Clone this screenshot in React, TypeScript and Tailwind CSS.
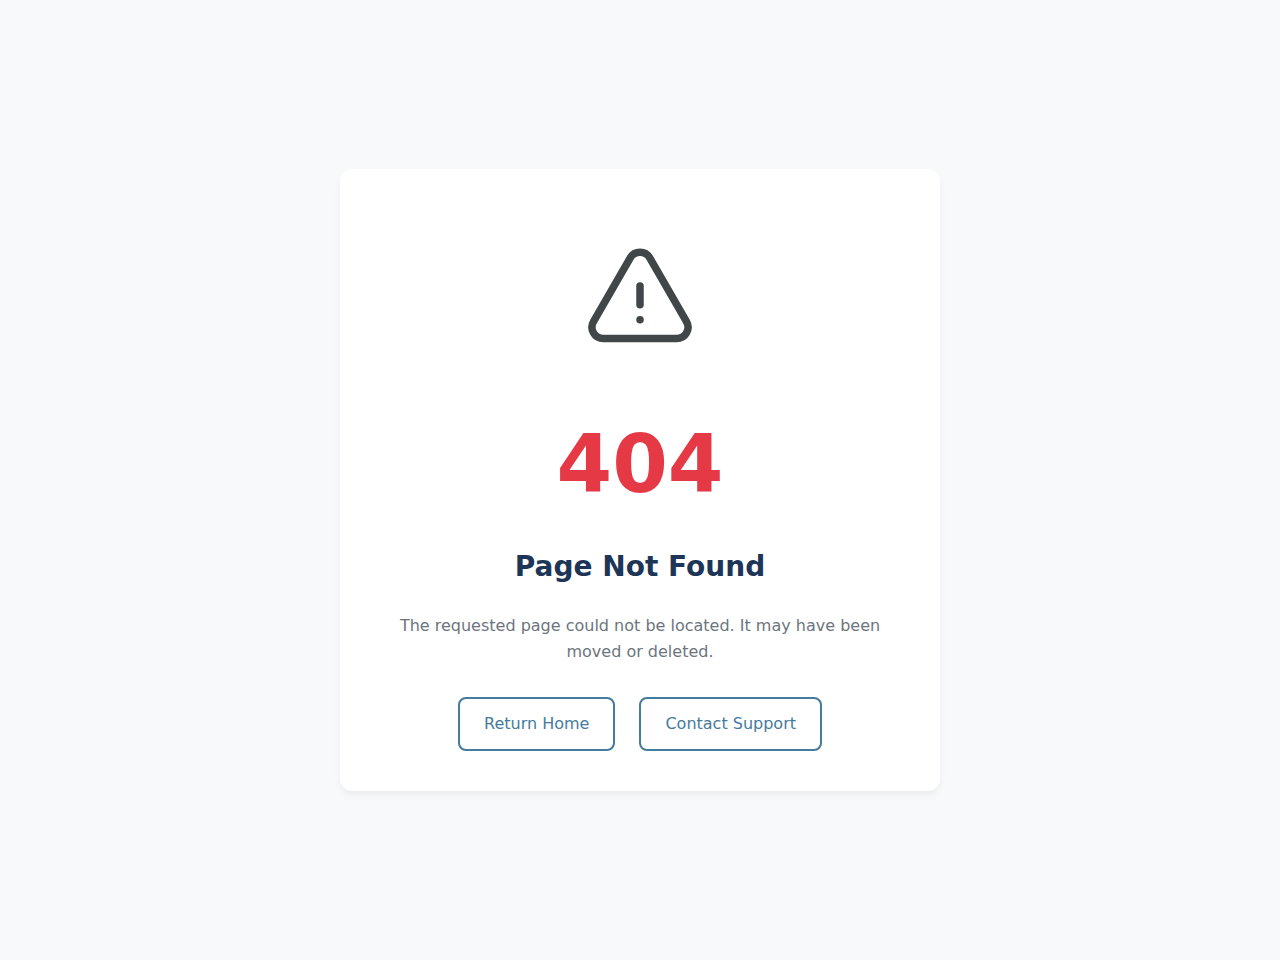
const actions = [
  { label: "Return Home", href: "/" },
  { label: "Contact Support", href: "/support" },
];

function WarningIcon() {
  return (
    <svg
      className="mt-8 mb-10 size-30 text-[#414749]"
      viewBox="0 0 24 24"
      fill="none"
      stroke="currentColor"
      strokeWidth="1.5"
      strokeLinecap="round"
      strokeLinejoin="round"
      aria-hidden="true"
    >
      <path d="M12 9v3.75m-9.303 3.376c-.866 1.5.217 3.374 1.948 3.374h14.71c1.73 0 2.813-1.874 1.948-3.374L13.949 3.378c-.866-1.5-3.032-1.5-3.898 0L2.697 16.126ZM12 15.75h.007v.008H12v-.008Z" />
    </svg>
  );
}

export default function App() {
  return (
    <div className="flex min-h-screen items-center justify-center bg-[#f8f9fa] font-['DejaVu_Sans',sans-serif]">
      <main className="flex w-full max-w-[600px] flex-col items-center rounded-xl bg-white p-10 text-center shadow-[0_4px_6px_rgba(0,0,0,0.05)]">
        <WarningIcon />
        <h1 className="text-[80px] leading-[128px] font-bold text-[#e63946]">404</h1>
        <h2 className="mt-4 text-[28px] leading-[44px] font-bold text-[#1d3557]">Page Not Found</h2>
        <p className="mt-6 text-base leading-[26px] text-[#6c757d]">
          The requested page could not be located. It may have been moved or deleted.
        </p>
        <nav className="mt-8 flex flex-wrap justify-center gap-6">
          {actions.map((action) => (
            <a
              key={action.label}
              href={action.href}
              className="rounded-lg border-2 border-[#457b9d] px-6 py-3 text-base leading-[26px] text-[#457b9d] transition-colors hover:bg-[#457b9d] hover:text-white"
            >
              {action.label}
            </a>
          ))}
        </nav>
      </main>
    </div>
  );
}
